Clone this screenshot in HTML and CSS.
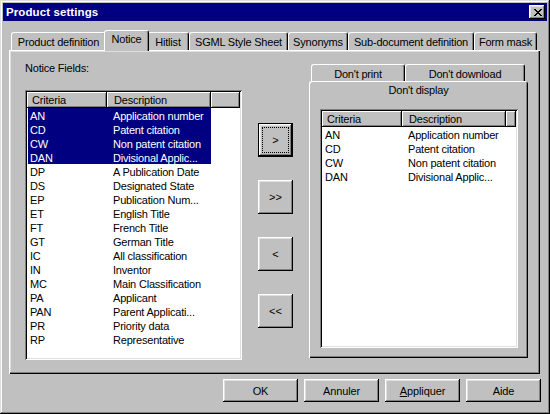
FILE: index.html
```html
<!DOCTYPE html>
<html lang="en">
<head>
  <meta charset="UTF-8">
  <title>Product settings</title>
  <link rel="stylesheet" href="styles.css">
</head>
<body>
  <div class="window">
    <div class="titlebar">
      <span class="title">Product settings</span>
      <button class="close-btn" aria-label="Close">
        <svg width="8" height="7" viewBox="0 0 8 7" shape-rendering="crispEdges"><path d="M0 0h2v1H0zM6 0h2v1H6zM1 1h2v1H1zM5 1h2v1H5zM2 2h4v1H2zM3 3h2v1H3zM2 4h4v1H2zM1 5h2v1H1zM5 5h2v1H5zM0 6h2v1H0zM6 6h2v1H6z" fill="#000"/></svg>
      </button>
    </div>

    <div class="tabs">
      <div class="tab tab-pd">Product definition</div>
      <div class="tab tab-notice active">Notice</div>
      <div class="tab tab-hitlist">Hitlist</div>
      <div class="tab tab-sgml">SGML Style Sheet</div>
      <div class="tab tab-syn">Synonyms</div>
      <div class="tab tab-subdoc">Sub-document definition</div>
      <div class="tab tab-form">Form mask</div>
    </div>

    <div class="panel">
      <div class="col-left">
        <div class="label">Notice Fields:</div>
        <div class="listview list-left">
          <div class="lv-header">
            <div class="lv-col crit">Criteria</div>
            <div class="lv-col desc">Description</div>
            <div class="lv-col rest"></div>
          </div>
          <div class="lv-row selected"><span class="c1">AN</span><span class="c2">Application number</span></div>
          <div class="lv-row selected"><span class="c1">CD</span><span class="c2">Patent citation</span></div>
          <div class="lv-row selected"><span class="c1">CW</span><span class="c2">Non patent citation</span></div>
          <div class="lv-row selected"><span class="c1">DAN</span><span class="c2">Divisional Applic...</span></div>
          <div class="lv-row"><span class="c1">DP</span><span class="c2">A Publication Date</span></div>
          <div class="lv-row"><span class="c1">DS</span><span class="c2">Designated State</span></div>
          <div class="lv-row"><span class="c1">EP</span><span class="c2">Publication Num...</span></div>
          <div class="lv-row"><span class="c1">ET</span><span class="c2">English Title</span></div>
          <div class="lv-row"><span class="c1">FT</span><span class="c2">French Title</span></div>
          <div class="lv-row"><span class="c1">GT</span><span class="c2">German Title</span></div>
          <div class="lv-row"><span class="c1">IC</span><span class="c2">All classification</span></div>
          <div class="lv-row"><span class="c1">IN</span><span class="c2">Inventor</span></div>
          <div class="lv-row"><span class="c1">MC</span><span class="c2">Main Classification</span></div>
          <div class="lv-row"><span class="c1">PA</span><span class="c2">Applicant</span></div>
          <div class="lv-row"><span class="c1">PAN</span><span class="c2">Parent Applicati...</span></div>
          <div class="lv-row"><span class="c1">PR</span><span class="c2">Priority data</span></div>
          <div class="lv-row"><span class="c1">RP</span><span class="c2">Representative</span></div>
        </div>
      </div>

      <div class="col-mid">
        <button class="btn move-btn default"><span class="focus">&gt;</span></button>
        <button class="btn move-btn">&gt;&gt;</button>
        <button class="btn move-btn">&lt;</button>
        <button class="btn move-btn">&lt;&lt;</button>
      </div>

      <div class="col-right">
        <div class="subtabs">
          <div class="subtab st-print">Don't print</div>
          <div class="subtab st-download">Don't download</div>
        </div>
        <div class="subpanel">
          <div class="subcaption">Don't display</div>
          <div class="listview list-right">
            <div class="lv-header">
              <div class="lv-col crit">Criteria</div>
              <div class="lv-col desc">Description</div>
              <div class="lv-col rest"></div>
            </div>
            <div class="lv-row"><span class="c1">AN</span><span class="c2">Application number</span></div>
            <div class="lv-row"><span class="c1">CD</span><span class="c2">Patent citation</span></div>
            <div class="lv-row"><span class="c1">CW</span><span class="c2">Non patent citation</span></div>
            <div class="lv-row"><span class="c1">DAN</span><span class="c2">Divisional Applic...</span></div>
          </div>
        </div>
      </div>
    </div>

    <div class="footer">
      <button class="btn foot-btn">OK</button>
      <button class="btn foot-btn">Annuler</button>
      <button class="btn foot-btn"><u>A</u>ppliquer</button>
      <button class="btn foot-btn">Aide</button>
    </div>
  </div>
</body>
</html>
```

FILE: styles.css
```css
body { margin: 0; font-family: "Liberation Sans", Arial, sans-serif; font-size: 11px; color: #000; background: #c0c0c0; }

.window { width: 550px; height: 414px; box-sizing: border-box; padding: 3px; background: #c0c0c0; display: flex; flex-direction: column;
  box-shadow: inset -1px -1px #000, inset 1px 1px #dfdfdf, inset -2px -2px #808080, inset 2px 2px #fff; }

.titlebar { height: 18px; flex: none; background: #000080; color: #fff; display: flex; align-items: center; justify-content: space-between; padding: 0 2px 0 3px; }
.titlebar .title { font-weight: bold; font-size: 11.5px; letter-spacing: 0.1px; }
.close-btn { width: 16px; height: 14px; padding: 0 0 0 1px; border: none; background: #c0c0c0; display: flex; align-items: center; justify-content: center;
  box-shadow: inset -1px -1px #000, inset 1px 1px #fff, inset -2px -2px #808080, inset 2px 2px #dfdfdf; }

.tabs { display: flex; align-items: flex-end; height: 20px; flex: none; margin: 9px 0 0 8px; position: relative; z-index: 1; }
.tab { height: 18px; flex: none; box-sizing: border-box; padding-top: 3px; text-align: center; background: #c0c0c0; border-radius: 3px 3px 0 0; letter-spacing: -0.2px; white-space: nowrap;
  border-left: 1px solid #fff; border-top: 1px solid #fff; border-right: 1px solid #000; box-shadow: inset -1px 0 #808080; }
.tab.active { height: 21px; margin: 0 -2px -1px; padding-top: 2px; position: relative; z-index: 1; }
.tab-pd { width: 95px; }
.tab-notice { width: 45px; }
.tab-hitlist { width: 42px; }
.tab-sgml { width: 99px; }
.tab-syn { width: 60px; }
.tab-subdoc { width: 126px; }
.tab-form { width: 63px; }

.panel { height: 324px; flex: none; margin: 0 7px 0 6px; display: flex; align-items: flex-start;
  box-shadow: inset 1px 1px #fff, inset -1px -1px #000, inset -2px -2px #808080, inset 2px 2px #dfdfdf; }

.col-left { margin-left: 16px; width: 217px; }
.label { margin-top: 12px; line-height: 13px; letter-spacing: -0.2px; }

.listview { background: #fff; box-sizing: border-box; padding: 2px; overflow: hidden; letter-spacing: -0.2px;
  box-shadow: inset 1px 1px #808080, inset -1px -1px #fff, inset 2px 2px #000, inset -2px -2px #dfdfdf; }
.list-left { width: 217px; height: 270px; margin-top: 15px; }
.lv-header { display: flex; height: 16px; }
.lv-col { background: #c0c0c0; line-height: 16px; padding-left: 5px; box-sizing: border-box; white-space: nowrap;
  box-shadow: inset -1px -1px #000, inset 1px 1px #fff, inset -2px -2px #808080; }
.lv-col.crit { width: 80px; }
.lv-col.desc { width: 104px; padding-left: 7px; }
.lv-col.rest { flex: 1; }
.lv-row { display: flex; width: 183px; height: 14px; line-height: 16px; margin-left: 1px; white-space: nowrap; }
.lv-row.selected { background: #000080; color: #fff; }
.lv-row .c1 { width: 79px; padding-left: 2px; box-sizing: border-box; }
.lv-row .c2 { padding-left: 6px; }

.col-mid { margin-left: 16px; width: 35px; display: flex; flex-direction: column; gap: 23px; padding-top: 73px; }

.btn { font-family: inherit; font-size: 11px; color: #000; background: #c0c0c0; border: none; padding: 0; cursor: pointer;
  box-shadow: inset -1px -1px #000, inset 1px 1px #fff, inset -2px -2px #808080, inset 2px 2px #dfdfdf; }
.move-btn { width: 35px; height: 34px; }
.move-btn.default { border: 1px solid #000; display: flex; align-items: stretch; padding: 3px; box-sizing: border-box; }
.move-btn .focus { flex: 1; display: flex; align-items: center; justify-content: center; border: 1px dotted #000; }

.col-right { margin-left: 16px; width: 219px; }
.subtabs { display: flex; margin: 14px 0 0 2px; height: 17px; }
.subtab { height: 17px; box-sizing: border-box; padding-top: 3px; text-align: center; border-radius: 3px 3px 0 0; letter-spacing: -0.2px;
  border-left: 1px solid #fff; border-top: 1px solid #fff; border-right: 1px solid #000; box-shadow: inset -1px 0 #808080; }
.st-print { width: 94px; }
.st-download { width: 120px; }
.subpanel { height: 277px; box-sizing: border-box; padding-top: 2px; border-radius: 3px 3px 0 0;
  box-shadow: inset 1px 1px #fff, inset -1px -1px #000, inset -2px -2px #808080; }
.subcaption { text-align: center; line-height: 14px; letter-spacing: -0.2px; }
.list-right { width: 198px; height: 239px; margin: 12px 0 0 11px; }

.footer { display: flex; justify-content: flex-end; gap: 6px; margin: 5px 6px 0 0; }
.foot-btn { width: 75px; height: 23px; letter-spacing: -0.1px; }
```
